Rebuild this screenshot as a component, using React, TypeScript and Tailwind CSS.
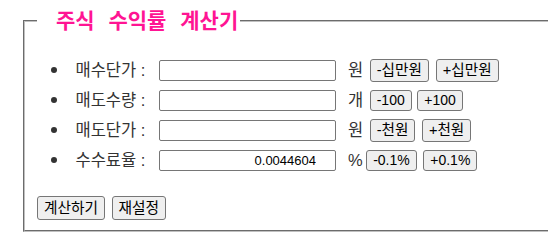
import React from "react";

type Row = {
  label: string;
  value: string;
  unit: string;
  minus: string;
  plus: string;
  unitGap: string;
  btnGap: string;
  korean: boolean;
};

const rows: Row[] = [
  { label: "매수단가 :", value: "", unit: "원", minus: "-십만원", plus: "+십만원", unitGap: "ml-[6.5px]", btnGap: "ml-[7px]", korean: true },
  { label: "매도수량 :", value: "", unit: "개", minus: "-100", plus: "+100", unitGap: "ml-[6.5px]", btnGap: "ml-[5.5px]", korean: false },
  { label: "매도단가 :", value: "", unit: "원", minus: "-천원", plus: "+천원", unitGap: "ml-[6.5px]", btnGap: "ml-[6.5px]", korean: true },
  { label: "수수료율 :", value: "0.0044604", unit: "%", minus: "-0.1%", plus: "+0.1%", unitGap: "ml-[3.5px]", btnGap: "ml-[6.5px]", korean: false },
];

const btn =
  "flex items-center justify-center px-[6px] bg-[#efefef] border border-[#767676] rounded-[3px] text-black leading-none whitespace-nowrap";

const App = () => {
  return (
    <div className="w-full h-[248px] overflow-hidden bg-white font-['Liberation_Sans','Noto_Sans_CJK_KR',sans-serif]">
      <fieldset className="ml-[23px] mt-[9px] w-[560px] border-2 [border-style:groove] border-[#c0c0c0] px-[12px] pt-0 pb-[10px]">
        <legend className="pl-[19px] pr-[2px] text-[21px] leading-[24px] font-bold text-[#ff1493] [word-spacing:8px]">
          주식 수익률 계산기
        </legend>
        <ul className="mt-[22px]">
          {rows.map((r) => (
            <li key={r.label} className="flex items-center h-[30px]">
              <span className="ml-[14px] w-[6px] h-[6px] rounded-full bg-[#333]" />
              <span className="ml-[18.5px] w-[83.5px] text-[16.5px] text-[#333] whitespace-nowrap">{r.label}</span>
              <input
                type="text"
                defaultValue={r.value}
                className="w-[177px] h-[21px] border border-[#767676] rounded-[2px] pl-[2px] pr-[19px] text-right text-[13px] text-black outline-none"
              />
              <span className="ml-[12px] text-[16.5px] text-[#333]">{r.unit}</span>
              <button
                className={`${btn} ${r.unitGap} ${r.korean ? "h-[23px] text-[14.6px]" : "h-[21px] text-[14px]"}`}
              >
                {r.minus}
              </button>
              <button
                className={`${btn} ${r.btnGap} ${r.korean ? "h-[23px] text-[14.6px]" : "h-[21px] text-[14px]"}`}
              >
                {r.plus}
              </button>
            </li>
          ))}
        </ul>
        <div className="flex mt-[21px] gap-[6.5px]">
          <button className={`${btn} h-[24px] text-[14.7px]`}>계산하기</button>
          <button className={`${btn} h-[24px] text-[14.7px]`}>재설정</button>
        </div>
      </fieldset>
    </div>
  );
};

export default App;
